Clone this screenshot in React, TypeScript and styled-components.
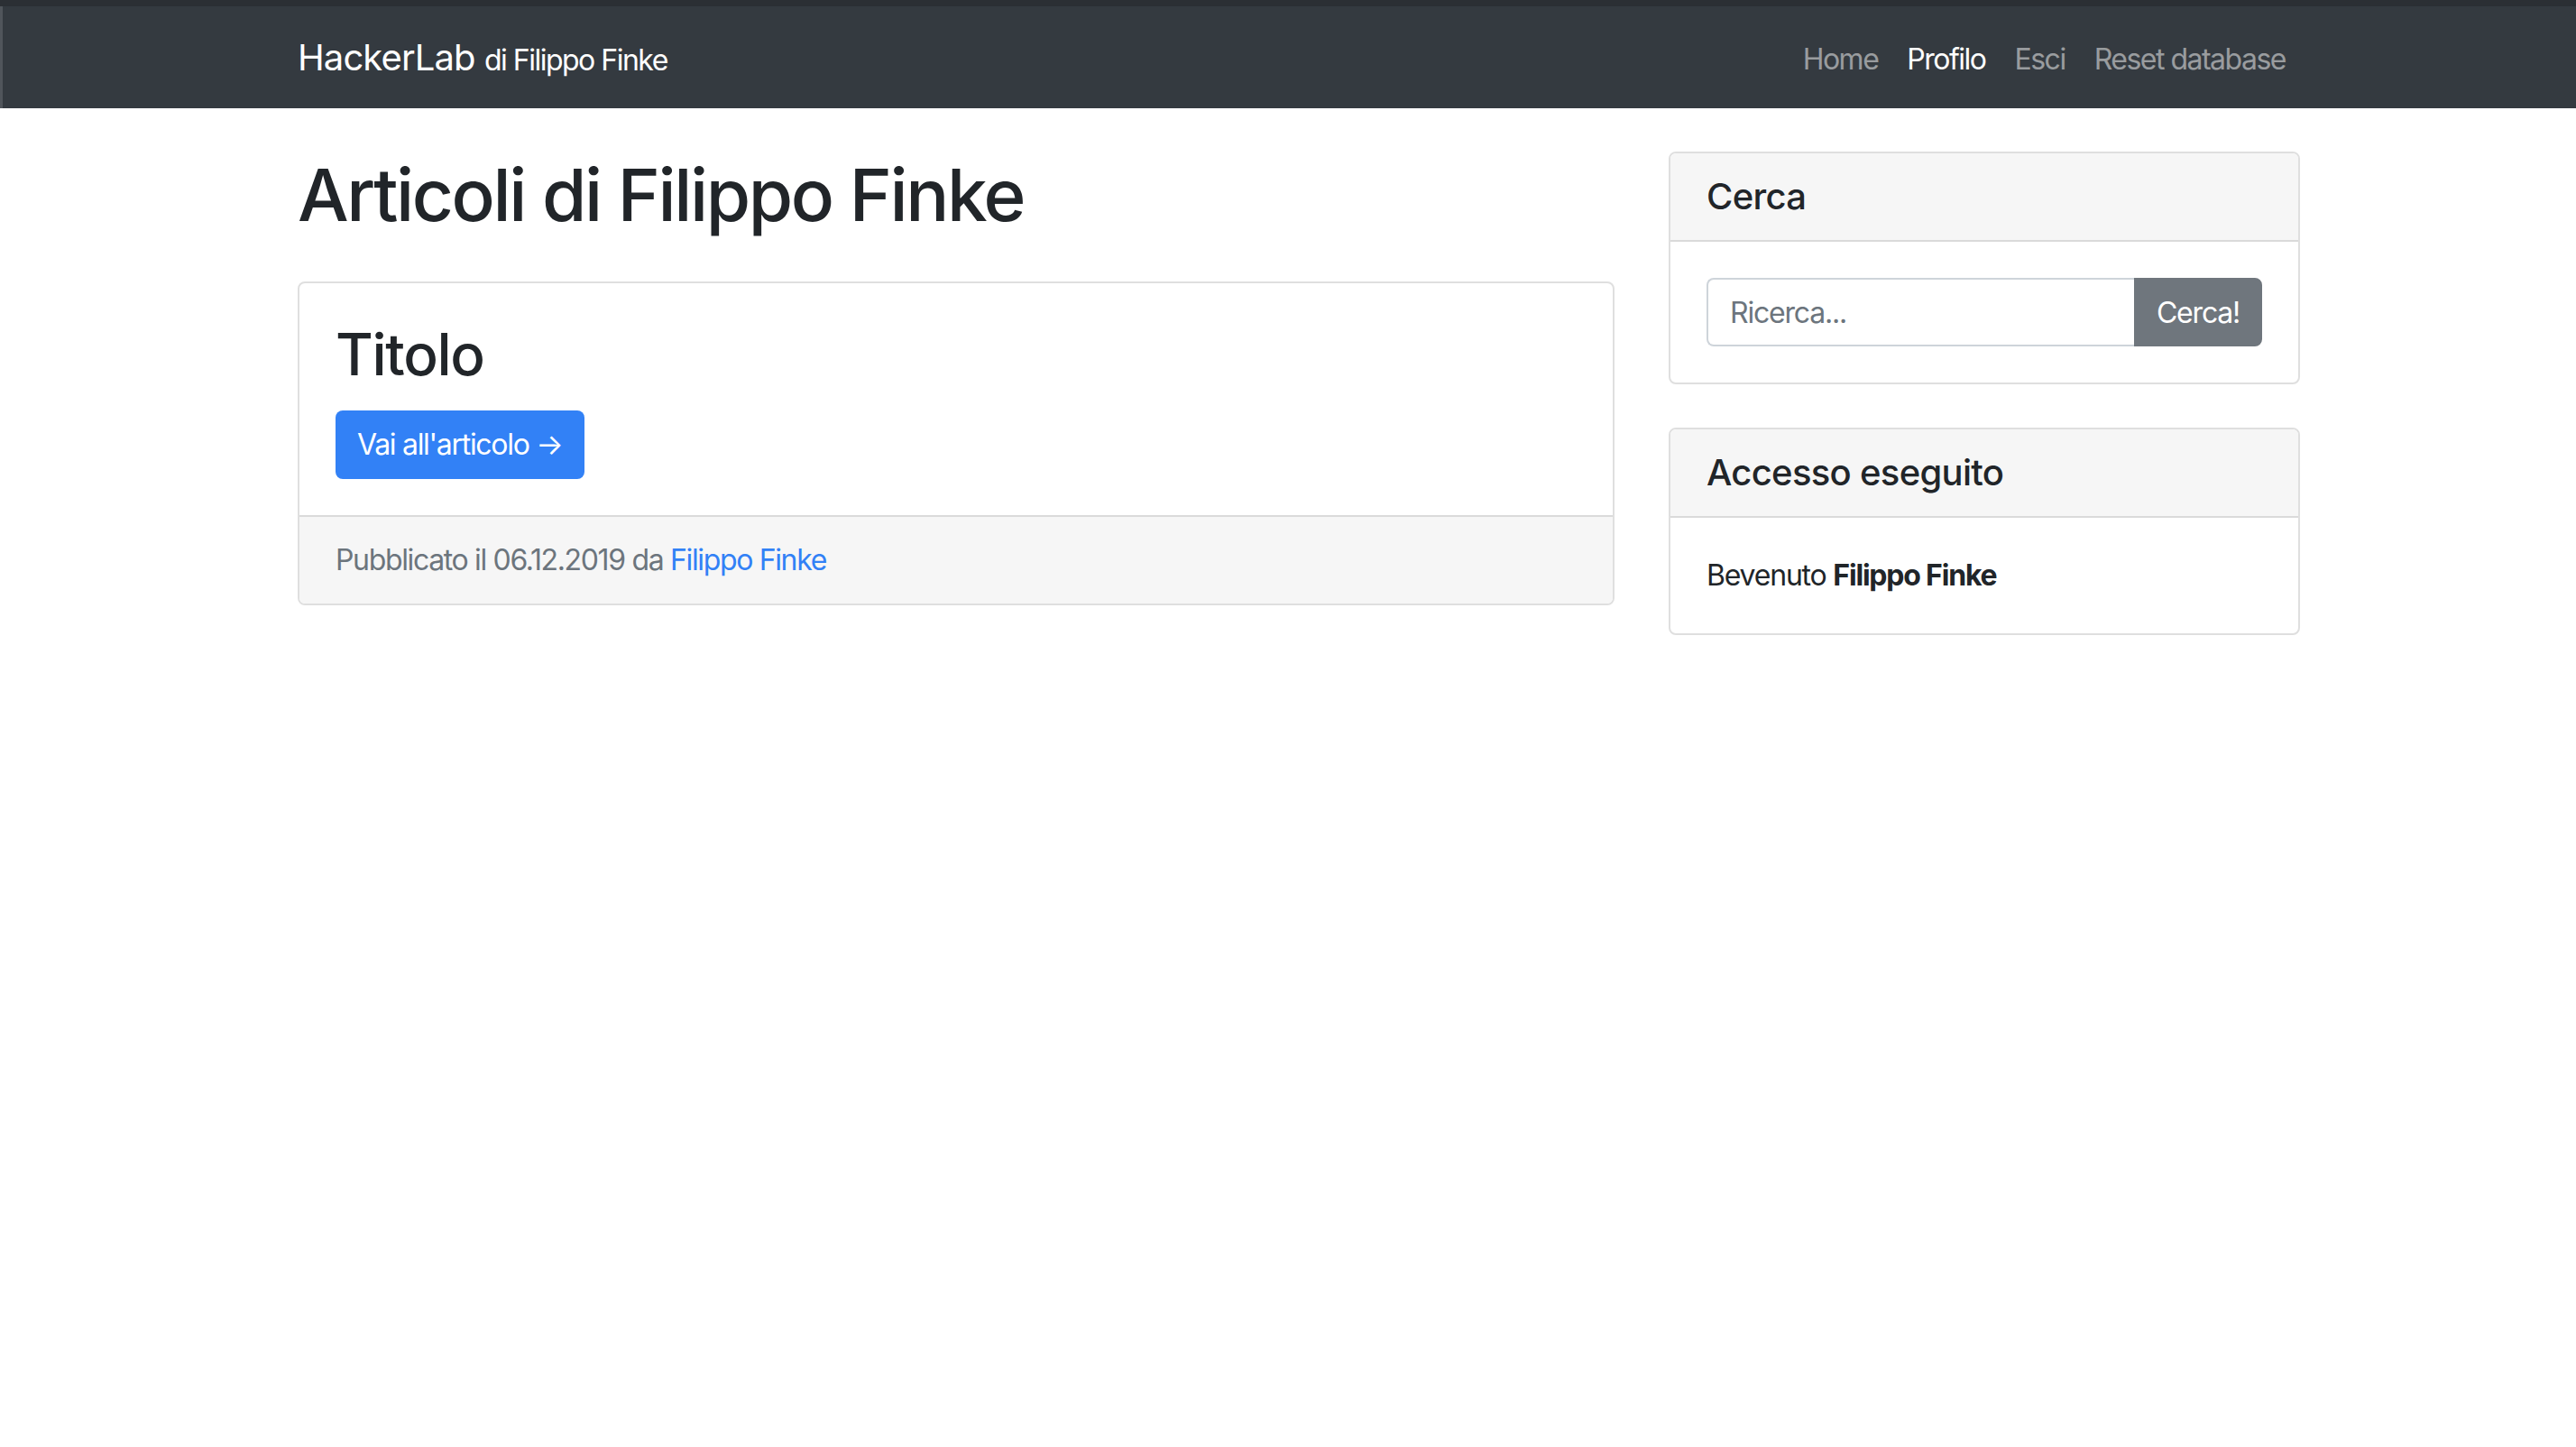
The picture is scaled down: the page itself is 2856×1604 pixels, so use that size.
import React from "react";
import styled, { createGlobalStyle } from "styled-components";

const Global = createGlobalStyle`
  * { box-sizing: border-box; }
  html, body { margin: 0; padding: 0; background: #ffffff; }
  body {
    font-family: Inter, "Noto Sans", "Liberation Sans", sans-serif;
    font-size: 32px;
    line-height: 1.5;
    color: #212529;
  }
`;

const Page = styled.div`
  min-height: 1604px;
  background: #ffffff;
`;

const Navbar = styled.nav`
  height: 120px;
  background: #343a40;
  border-top: 7px solid #2b2f34;
  box-shadow: inset 3px 0 0 #50555b;
  padding: 4px 0 0 24px;
  display: flex;
  align-items: center;
`;

const Container = styled.div`
  width: 2220px;
  margin: 0 auto;
`;

const NavInner = styled(Container)`
  display: flex;
  align-items: center;
  justify-content: space-between;
`;

const Brand = styled.a`
  color: #ffffff;
  font-size: 40px;
  line-height: 60px;
  text-decoration: none;
  white-space: nowrap;
  letter-spacing: -0.9px;
`;

const BrandSmall = styled.small`
  font-size: 32px;
  letter-spacing: -1.5px;
`;

const NavList = styled.ul`
  list-style: none;
  margin: 0;
  padding: 0;
  display: flex;
`;

const NavLink = styled.a<{ $active?: boolean }>`
  display: block;
  padding: 16px;
  font-size: 32px;
  line-height: 48px;
  letter-spacing: -1.5px;
  color: ${(p) => (p.$active ? "#ffffff" : "rgba(255,255,255,0.5)")};
  text-decoration: none;
`;

const Main = styled.div`
  padding-left: 24px;
`;

const Row = styled(Container)`
  display: grid;
  grid-template-columns: 1460px 700px;
  column-gap: 60px;
  align-items: start;
`;

const Column = styled.div`
  display: flex;
  flex-direction: column;
`;

const PageTitle = styled.h1`
  margin: 48px 0 48px;
  font-size: 80px;
  line-height: 96px;
  font-weight: 500;
  letter-spacing: -2.4px;
  color: #212529;
`;

const Card = styled.div<{ $gap?: number }>`
  border: 2px solid #dfdfdf;
  border-radius: 8px;
  background: #ffffff;
  overflow: hidden;
  margin-top: ${(p) => p.$gap ?? 0}px;
`;

const CardBody = styled.div`
  padding: 40px;
`;

const CardTitle = styled.h2`
  margin: 0 0 24px;
  font-size: 64px;
  line-height: 77px;
  font-weight: 500;
  letter-spacing: -1.3px;
`;

const PrimaryButton = styled.a`
  display: inline-flex;
  align-items: center;
  height: 76px;
  padding: 0 24px;
  background: #3281f6;
  color: #ffffff;
  border-radius: 8px;
  font-size: 32px;
  letter-spacing: -1.3px;
  text-decoration: none;
`;

const CardFooter = styled.div`
  padding: 24px 40px;
  background: #f6f6f6;
  border-top: 2px solid #dadada;
  color: #6c757d;
  font-size: 32px;
  line-height: 48px;
  letter-spacing: -1.35px;
`;

const Link = styled.a`
  color: #3281f6;
  text-decoration: none;
`;

const CardHeader = styled.div`
  padding: 24px 40px;
  background: #f6f6f6;
  border-bottom: 2px solid #dadada;
`;

const HeaderTitle = styled.h5`
  margin: 0;
  font-size: 40px;
  line-height: 48px;
  font-weight: 500;
  letter-spacing: -0.7px;
`;

const InputGroup = styled.div`
  display: flex;
  height: 76px;
`;

const SearchInput = styled.input`
  flex: 1;
  min-width: 0;
  height: 76px;
  padding: 0 24px;
  border: 2px solid #ced4da;
  border-right: none;
  border-radius: 8px 0 0 8px;
  font-family: inherit;
  font-size: 32px;
  letter-spacing: -1.2px;
  color: #495057;
  outline: none;
  &::placeholder { color: #6c757d; }
`;

const SecondaryButton = styled.button`
  width: 142px;
  height: 76px;
  border: 2px solid #6f767d;
  background: #6f767d;
  color: #ffffff;
  border-radius: 0 8px 8px 0;
  font-family: inherit;
  font-size: 32px;
  letter-spacing: -1.2px;
  padding: 0;
`;

const Welcome = styled.p`
  margin: 0;
  font-size: 32px;
  line-height: 48px;
  letter-spacing: -1.2px;
  b { font-weight: 700; }
`;

export default function App() {
  return (
    <Page>
      <Global />
      <Navbar>
        <NavInner>
          <Brand href="#">
            HackerLab <BrandSmall>di Filippo Finke</BrandSmall>
          </Brand>
          <NavList>
            <li><NavLink href="#">Home</NavLink></li>
            <li><NavLink href="#" $active>Profilo</NavLink></li>
            <li><NavLink href="#">Esci</NavLink></li>
            <li><NavLink href="#">Reset database</NavLink></li>
          </NavList>
        </NavInner>
      </Navbar>
      <Main>
        <Row>
          <Column>
            <PageTitle>Articoli di Filippo Finke</PageTitle>
            <Card>
              <CardBody>
                <CardTitle>Titolo</CardTitle>
                <PrimaryButton href="#">Vai all'articolo →</PrimaryButton>
              </CardBody>
              <CardFooter>
                Pubblicato il 06.12.2019 da <Link href="#">Filippo Finke</Link>
              </CardFooter>
            </Card>
          </Column>
          <Column>
            <Card $gap={48}>
              <CardHeader>
                <HeaderTitle>Cerca</HeaderTitle>
              </CardHeader>
              <CardBody>
                <InputGroup>
                  <SearchInput placeholder="Ricerca..." />
                  <SecondaryButton>Cerca!</SecondaryButton>
                </InputGroup>
              </CardBody>
            </Card>
            <Card $gap={48}>
              <CardHeader>
                <HeaderTitle>Accesso eseguito</HeaderTitle>
              </CardHeader>
              <CardBody>
                <Welcome>
                  Bevenuto <b>Filippo Finke</b>
                </Welcome>
              </CardBody>
            </Card>
          </Column>
        </Row>
      </Main>
    </Page>
  );
}
